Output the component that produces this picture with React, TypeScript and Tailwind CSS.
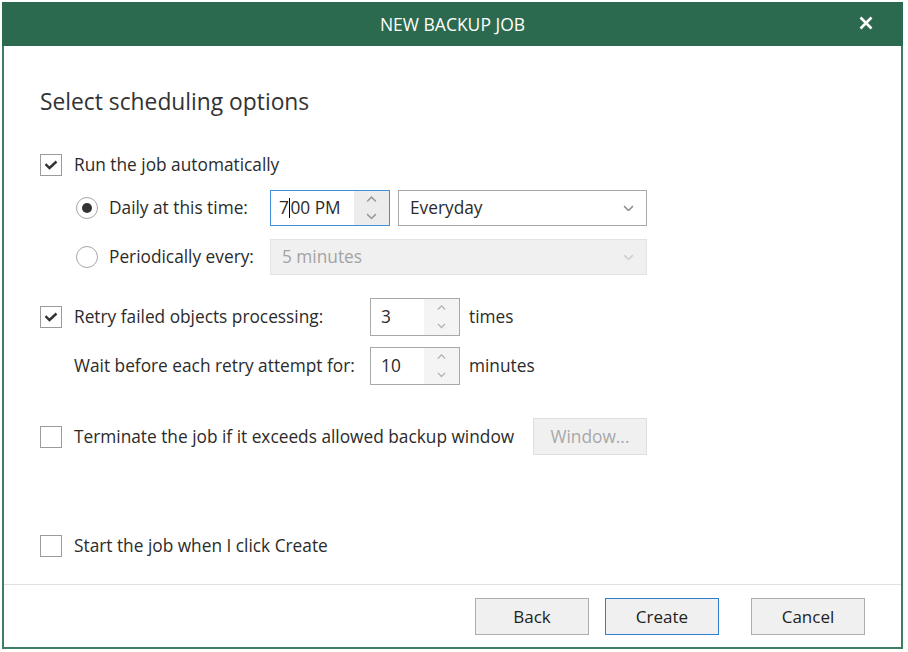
import React from "react";

const font = { fontFamily: '"Open Sans", "Noto Sans", Arial, sans-serif' };

function Check({ checked }: { checked?: boolean }) {
  return (
    <div className="w-[22px] h-[22px] border border-[#9b9b9b] bg-white flex items-center justify-center shrink-0">
      {checked && (
        <svg width="14" height="10" viewBox="0 0 14 10">
          <path d="M1.5 4.2 L5.5 8 L12.5 1.5" fill="none" stroke="#333" strokeWidth="2.4" />
        </svg>
      )}
    </div>
  );
}

function Radio({ checked }: { checked?: boolean }) {
  return (
    <div className="w-[22px] h-[22px] rounded-full border border-[#a7a7a7] bg-white flex items-center justify-center shrink-0">
      {checked && <div className="w-[10px] h-[10px] rounded-full bg-[#333]" />}
    </div>
  );
}

function Chevron({ up, color = "#8a8a8a", size = 11 }: { up?: boolean; color?: string; size?: number }) {
  return (
    <svg width={size} height={size * 0.6} viewBox="0 0 10 6">
      <path d={up ? "M1 5 L5 1 L9 5" : "M1 1 L5 5 L9 1"} fill="none" stroke={color} strokeWidth="1.4" />
    </svg>
  );
}

function SpinBox({ value }: { value: string }) {
  return (
    <div className="w-[90px] h-[38px] border border-[#a8a8a8] bg-white flex">
      <div className="flex-1 flex items-center pl-[10px] text-[#2b2b2b]">{value}</div>
      <div className="w-[35px] flex flex-col bg-[#f4f4f4]">
        <div className="flex-1 flex items-center justify-center">
          <Chevron up color="#b0b0b0" size={9} />
        </div>
        <div className="flex-1 flex items-center justify-center">
          <Chevron color="#b0b0b0" size={9} />
        </div>
      </div>
    </div>
  );
}

function Button({ label, primary }: { label: string; primary?: boolean }) {
  return (
    <div
      className={
        "w-[114px] h-[37px] flex items-center justify-center text-[17px] text-[#222] bg-[#f0f0f0] border " +
        (primary ? "border-[#2f7fd0]" : "border-[#adadad]")
      }
    >
      {label}
    </div>
  );
}

export default function App() {
  return (
    <div className="w-[908px] h-[652px] bg-white pt-[2px] pl-[2px]" style={font}>
      <div className="w-[901px] h-[647px] flex flex-col">
        <div className="h-[44px] bg-[#2b6a4e] relative flex items-center justify-center">
          <span className="text-white text-[17.5px]">NEW BACKUP JOB</span>
          <svg className="absolute right-[30px] top-[14px]" width="14" height="14" viewBox="0 0 14 14">
            <path d="M1.5 1.5 L12.5 12.5 M12.5 1.5 L1.5 12.5" stroke="white" strokeWidth="2.6" />
          </svg>
        </div>
        <div className="flex-1 flex flex-col border-x-2 border-b-2 border-[#3f7d62] bg-white text-[#2b2b2b] text-[17.3px] leading-[24px]">
          <div className="pl-[36px] flex flex-col">
            <div className="mt-[42px] h-[28px] text-[22.8px] leading-[28px] text-[#333]">Select scheduling options</div>

            <div className="mt-[38px] h-[22px] flex items-center gap-[12px]">
              <Check checked />
              <span>Run the job automatically</span>
            </div>

            <div className="mt-[14px] h-[36px] pl-[36px] flex items-center">
              <div className="w-[194px] flex items-center gap-[11px]">
                <Radio checked />
                <span>Daily at this time:</span>
              </div>
              <div className="w-[120px] h-[36px] border-[1.5px] border-[#3f8fd8] flex bg-white">
                <div className="flex-1 flex items-center pl-[8px]">
                  <span>7</span>
                  <span className="inline-block w-[1.5px] h-[20px] bg-black" />
                  <span>00 PM</span>
                </div>
                <div className="w-[35px] flex flex-col bg-[#ececec]">
                  <div className="flex-1 flex items-center justify-center">
                    <Chevron up color="#9a9a9a" />
                  </div>
                  <div className="flex-1 flex items-center justify-center">
                    <Chevron color="#9a9a9a" />
                  </div>
                </div>
              </div>
              <div className="ml-[8px] w-[249px] h-[36px] border border-[#a8a8a8] flex items-center justify-between pl-[11px] pr-[12px] bg-white">
                <span>Everyday</span>
                <Chevron color="#8f8f8f" size={11} />
              </div>
            </div>

            <div className="mt-[13px] h-[36px] pl-[36px] flex items-center">
              <div className="w-[194px] flex items-center gap-[11px]">
                <Radio />
                <span>Periodically every:</span>
              </div>
              <div className="w-[377px] h-[36px] border border-[#e3e3e3] bg-[#f0f0f0] flex items-center justify-between pl-[11px] pr-[12px]">
                <span className="text-[#a3a3a3]">5 minutes</span>
                <Chevron color="#cfcfcf" size={11} />
              </div>
            </div>

            <div className="mt-[23px] h-[38px] flex items-center">
              <div className="w-[330px] flex items-center gap-[12px]">
                <Check checked />
                <span>Retry failed objects processing:</span>
              </div>
              <SpinBox value="3" />
              <span className="ml-[9px]">times</span>
            </div>

            <div className="mt-[11px] h-[38px] flex items-center">
              <div className="w-[330px] pl-[34px] whitespace-nowrap">Wait before each retry attempt for:</div>
              <SpinBox value="10" />
              <span className="ml-[9px]">minutes</span>
            </div>

            <div className="mt-[33px] h-[37px] flex items-center">
              <div className="w-[493px] flex items-center gap-[12px] whitespace-nowrap">
                <Check />
                <span>Terminate the job if it exceeds allowed backup window</span>
              </div>
              <div className="w-[114px] h-[37px] border border-[#dedede] bg-[#f0f0f0] flex items-center justify-center text-[#a8a8a8]">
                Window...
              </div>
            </div>

            <div className="mt-[80px] h-[22px] flex items-center gap-[12px]">
              <Check />
              <span>Start the job when I click Create</span>
            </div>
          </div>

          <div className="mt-auto border-t border-[#e0e0e0] pt-[13px] pb-[12px] pr-[36px] flex justify-end">
            <Button label="Back" />
            <div className="ml-[16px]">
              <Button label="Create" primary />
            </div>
            <div className="ml-[32px]">
              <Button label="Cancel" />
            </div>
          </div>
        </div>
      </div>
    </div>
  );
}
